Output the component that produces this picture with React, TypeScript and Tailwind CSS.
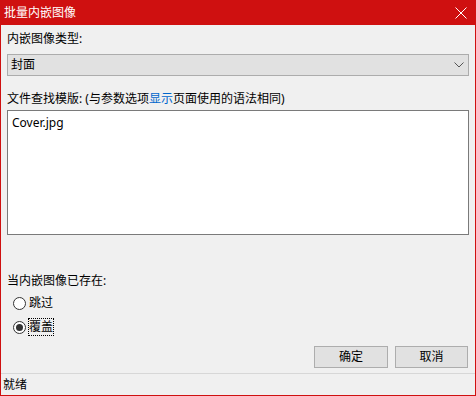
import React from "react"

const font = { fontFamily: '"Noto Sans", "Noto Sans CJK SC", sans-serif' }

function Radio({ checked, label, focused }: { checked?: boolean; label: string; focused?: boolean }) {
  return (
    <div className="flex items-center h-[24px] pl-[12px]">
      <span className="w-[13px] h-[13px] rounded-full border border-[#333] bg-white flex items-center justify-center">
        {checked && <span className="w-[7px] h-[7px] rounded-full bg-[#333]" />}
      </span>
      <span
        className={
          "ml-[2px] leading-[18px] px-px " + (focused ? "outline-1 outline-dotted outline-black -outline-offset-1" : "")
        }
      >
        {label}
      </span>
    </div>
  )
}

export default function App() {
  return (
    <div className="w-[476px] h-[396px] bg-[#cf1010] flex flex-col text-[12px] text-black" style={font}>
      {/* title bar */}
      <div className="h-[25px] flex items-center justify-between pl-[4px] pr-[9px] text-white">
        <span className="leading-[14px]">批量内嵌图像</span>
        <svg width="12" height="12" viewBox="0 0 12 12" className="mt-[1px]">
          <path d="M0.5 0.5 L11.5 11.5 M11.5 0.5 L0.5 11.5" stroke="white" strokeWidth="1" />
        </svg>
      </div>

      <div className="flex-1 mx-px mb-px bg-[#f0f0f0] flex flex-col">
        <div className="px-[6px] pt-[6px] flex flex-col">
          <div className="leading-[16px]">内嵌图像类型:</div>
          <div className="mt-[7px] h-[22px] border border-[#acacac] bg-[#e1e1e1] flex items-center justify-between pl-[3px] pr-[4px]">
            <span className="leading-[16px]">封面</span>
            <svg width="10" height="6" viewBox="0 0 10 6">
              <path d="M0.5 0.5 L5 5 L9.5 0.5" stroke="#555" strokeWidth="1" fill="none" />
            </svg>
          </div>

          <div className="mt-[15px] leading-[16px]">
            文件查找模版: (与参数选项<span className="text-[#0066cc]">显示</span>页面使用的语法相同)
          </div>
          <div className="mt-[3px] h-[125px] border border-[#7a7a7a] bg-white px-[4px] pt-[4px] leading-[16px]">
            Cover.jpg
          </div>

          <div className="mt-[38px] leading-[16px]">当内嵌图像已存在:</div>
        </div>

        <div className="mt-[2px] flex flex-col">
          <Radio label="跳过" />
          <Radio label="覆盖" checked focused />
        </div>

        <div className="mt-[7px] flex justify-end gap-[7px] pr-[7px]">
          <button className="w-[74px] h-[22px] border border-[#adadad] bg-[#e1e1e1] leading-[16px]">确定</button>
          <button className="w-[73px] h-[22px] border border-[#adadad] bg-[#e1e1e1] leading-[16px]">取消</button>
        </div>

        <div className="mt-[5px] h-px bg-[#d7d7d7]" />
        <div className="flex-1 flex items-center pl-[2px]">
          <span className="leading-[16px]">就绪</span>
        </div>
      </div>
    </div>
  )
}
